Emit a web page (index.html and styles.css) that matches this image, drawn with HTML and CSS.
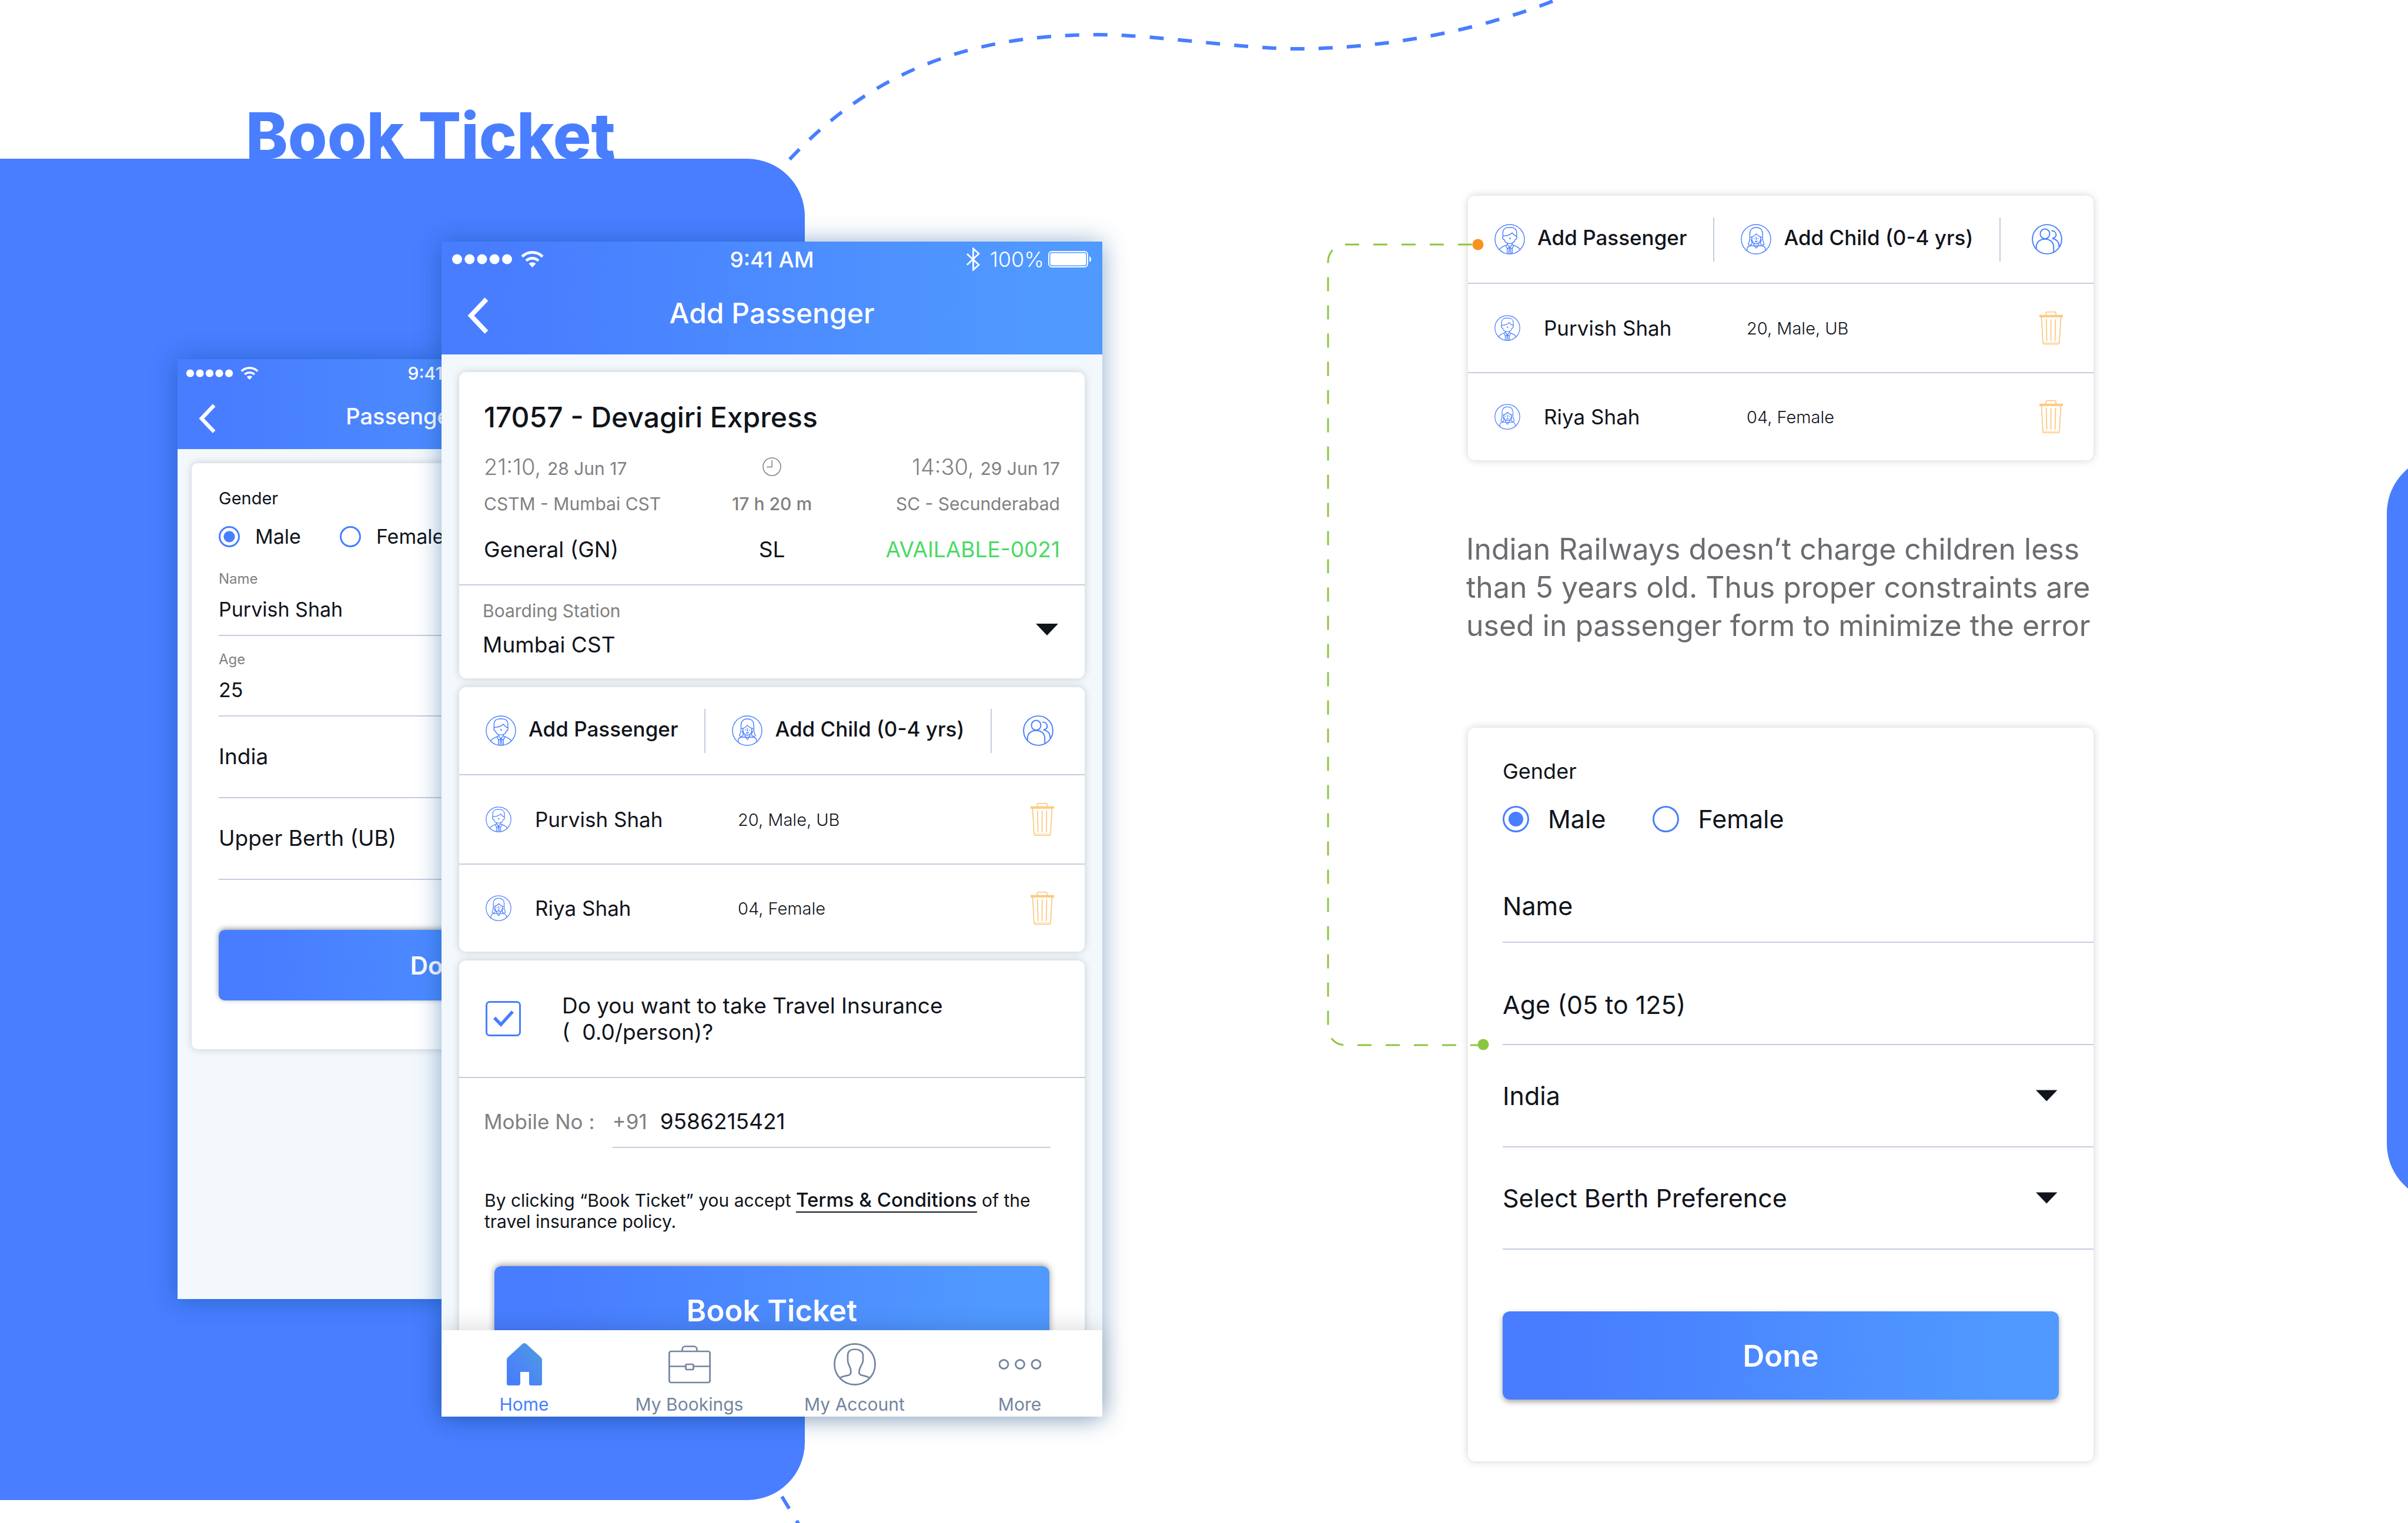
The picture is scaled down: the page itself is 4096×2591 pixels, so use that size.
FILE: index.html
```html
<!DOCTYPE html>
<html lang="en">
<head>
<meta charset="utf-8">
<title>Book Ticket</title>
<meta name="viewport" content="width=device-width, initial-scale=1">
<link rel="stylesheet" href="styles.css">
</head>
<body>
<svg class="sprite" aria-hidden="true">
  <defs>
    <linearGradient id="home-fill" x1="0" y1="1" x2="1" y2="0">
      <stop offset="0.1" stop-color="#487dff"/>
      <stop offset="0.9" stop-color="#4f98e2"/>
    </linearGradient>
    <symbol id="i-man" viewBox="0 0 74 74">
      <g fill="none" stroke="currentColor" stroke-width="2" stroke-linejoin="round" stroke-linecap="round">
        <circle cx="37" cy="37" r="35.6"/>
        <path d="M20.500 30V22C20.500 13 26 8.500 33 8.500H41C48 8.500 54 13 54 22V30"/>
        <path d="M23 29C29 29 37 27 43 21.500C45 24 47 27 51 29"/>
        <path d="M23 29C19 28 18 37 24 38C25 44 30 47.500 37 47.500S49 44 50 38C56 37 55 28 51 29"/>
        <path d="M37 33V36H39"/>
        <path d="M31.500 46V50L37 56L43 50V46"/>
        <path d="M31.500 50C24 53 16 55 12 62M43 50C50 53 58 55 62 62"/>
        <path d="M27.500 52L31.500 60L37 56L42.500 60L47 52"/>
        <path d="M31 60V71M43 60V71M36 59L35 72M38 59L40 72"/>
      </g>
    </symbol>
    <symbol id="i-girl" viewBox="0 0 74 74">
      <g fill="none" stroke="currentColor" stroke-width="2" stroke-linejoin="round" stroke-linecap="round">
        <circle cx="37" cy="37" r="35.6"/>
        <path d="M22 36V24C22 14 28 8.500 37.500 8.500S53 14 53 24V36"/>
        <path d="M24 32C31 31 34 28 37.500 24C41 28 45 31 51 32"/>
        <path d="M27 32V38C28 44 32 48 37.500 48S47 44 48 38V32"/>
        <path d="M22 36C22 42 18 46 18.500 50C22 52 27 51 27.500 46L25 38M53 36C53 42 57 46 56.500 50C53 52 48 51 47.500 46L50 38"/>
        <path d="M32.500 35V36M42.500 35V36M35 42C36 44 39 44 40 42ZM37.500 32V38"/>
        <path d="M31 48L33 53H42L44 48M34 54L37.500 58.500L41 54"/>
        <path d="M15 64C15 57 18 53 24 53H33M60 64C60 57 57 53 51 53H42"/>
      </g>
    </symbol>
    <symbol id="i-group" viewBox="0 0 74 74">
      <g fill="none" stroke="currentColor" stroke-width="2.800" stroke-linecap="round">
        <circle cx="37" cy="37" r="35.400"/>
        <ellipse cx="32" cy="24" rx="11.500" ry="11.800"/>
        <path d="M11 61V56C11 44 20 36.500 32 36.500S53 44 53 56V67"/>
        <path d="M48.500 16.500C55 17 59 21 59 26.500C59 31 55 34 49.500 35C59 37 66 43 66 54"/>
      </g>
    </symbol>
    <symbol id="i-trash" viewBox="0 0 54 76">
      <g fill="none" stroke="currentColor" stroke-width="2.200">
        <path d="M15 9V4C15 2 16 1 18 1H35C37 1 38 2 38 4V9"/>
        <path d="M1 9H53V12H1Z" fill="#ffdda9"/>
        <path d="M4.500 12L8 72C8 74 9 75 11 75H43C45 75 46 74 46 72L49.500 12"/>
        <path d="M8 71.500H46" stroke="#ffe3bb"/>
        <path d="M16 18L17 68M26.500 18V68M37 18L36 68"/>
      </g>
    </symbol>
    <symbol id="i-back" viewBox="0 0 36 62">
      <path d="M32.500 3L6 31L32.500 59" fill="none" stroke="currentColor" stroke-width="8"/>
    </symbol>
    <symbol id="i-signal" viewBox="0 0 102 18">
      <g fill="currentColor"><circle cx="8.500" cy="9" r="8.500"/><circle cx="29.800" cy="9" r="8.500"/><circle cx="51" cy="9" r="8.500"/><circle cx="72.200" cy="9" r="8.500"/><circle cx="93.500" cy="9" r="8.500"/></g>
    </symbol>
    <symbol id="i-wifi" viewBox="0 0 39 28">
      <path d="M2 9.500C12 0 27 0 37 9.500M9 16.500C15 11 24 11 30 16.500" fill="none" stroke="currentColor" stroke-width="4.600"/>
      <path d="M13.500 21.500C17 18.500 22 18.500 25.500 21.500L19.500 28Z" fill="currentColor"/>
    </symbol>
    <symbol id="i-caret" viewBox="0 0 38 20">
      <path d="M0 0H38L19 20Z" fill="currentColor"/>
    </symbol>
  </defs>
</svg>

<main class="board">
  <svg class="route" viewBox="0 0 4096 2591" aria-hidden="true">
    <path d="M2641 2C2520 50 2360 83 2207 83C2110 83 1965 59 1868 59C1640 59 1470 127 1326 290"/>
    <path d="M1330 2546L1364 2602"/>
  </svg>

  <section class="showcase">
    <h1 class="headline">Book Ticket</h1>
    <div class="phones">

      <article class="phone phone-back">
        <header class="phone-head">
          <div class="status">
            <div class="status-left">
              <svg class="signal"><use href="#i-signal"/></svg>
              <svg class="wifi"><use href="#i-wifi"/></svg>
            </div>
            <span class="clock-time">9:41 AM</span>
            <span></span>
          </div>
          <div class="navbar">
            <button class="icon-button back" type="button" aria-label="Back"><svg><use href="#i-back"/></svg></button>
            <h2 class="nav-title">Passenger Details</h2>
            <span></span>
          </div>
        </header>
        <div class="phone-body">
          <form class="card details-form compact">
            <fieldset class="gender">
              <legend>Gender</legend>
              <div class="choices">
                <label><input type="radio" name="gender-a" checked>Male</label>
                <label><input type="radio" name="gender-a">Female</label>
              </div>
            </fieldset>
            <div class="labelled">
              <label for="name-a">Name</label>
              <input id="name-a" type="text" value="Purvish Shah">
            </div>
            <div class="labelled">
              <label for="age-a">Age</label>
              <input id="age-a" type="text" value="25">
            </div>
            <div class="line-field">
              <select aria-label="Country"><option>India</option></select>
            </div>
            <div class="line-field">
              <select aria-label="Berth preference"><option>Upper Berth (UB)</option></select>
            </div>
            <button class="primary" type="button">Done</button>
          </form>
        </div>
      </article>

      <article class="phone phone-front">
        <header class="phone-head">
          <div class="status">
            <div class="status-left">
              <svg class="signal"><use href="#i-signal"/></svg>
              <svg class="wifi"><use href="#i-wifi"/></svg>
            </div>
            <span class="clock-time">9:41 AM</span>
            <div class="status-right">
              <svg class="bluetooth" viewBox="0 0 24 40"><path d="M2 11L22 29.500L12.500 38V2L22 10.500L2 29.500" fill="none" stroke="currentColor" stroke-width="2.800"/></svg>
              <span>100%</span>
              <svg class="battery" viewBox="0 0 74 28"><rect x="1" y="1" width="66" height="26" rx="5" fill="none" stroke="currentColor" stroke-width="2"/><rect x="3.500" y="3.500" width="61" height="21" rx="3" fill="currentColor"/><path d="M70 9C74 10 74 18 70 19Z" fill="currentColor"/></svg>
            </div>
          </div>
          <div class="navbar">
            <button class="icon-button back" type="button" aria-label="Back"><svg><use href="#i-back"/></svg></button>
            <h2 class="nav-title">Add Passenger</h2>
            <span></span>
          </div>
        </header>

        <div class="phone-body">
          <section class="card">
            <div class="trip">
              <h3>17057 - Devagiri Express</h3>
              <div class="trip-row trip-times">
                <p>21:10, <small>28 Jun 17</small></p>
                <svg viewBox="0 0 32 32" aria-hidden="true"><g fill="none" stroke="currentColor" stroke-width="1.500"><circle cx="16" cy="16" r="15"/><path d="M16 5V16.500H7"/></g></svg>
                <p>14:30, <small>29 Jun 17</small></p>
              </div>
              <div class="trip-row trip-stations">
                <p>CSTM - Mumbai CST</p>
                <p class="duration">17 h 20 m</p>
                <p>SC - Secunderabad</p>
              </div>
              <div class="trip-row trip-class">
                <p>General (GN)</p>
                <p>SL</p>
                <p class="available">AVAILABLE-0021</p>
              </div>
            </div>
            <div class="boarding">
              <label for="boarding">Boarding Station</label>
              <select id="boarding"><option>Mumbai CST</option></select>
              <svg class="caret"><use href="#i-caret"/></svg>
            </div>
          </section>

          <section class="card">
            <div class="toolbar">
              <button class="tool" type="button"><svg><use href="#i-man"/></svg><span>Add Passenger</span></button>
              <i class="rule"></i>
              <button class="tool" type="button"><svg><use href="#i-girl"/></svg><span>Add Child (0-4 yrs)</span></button>
              <i class="rule"></i>
              <button class="tool tool-last" type="button" aria-label="Saved passengers"><svg><use href="#i-group"/></svg></button>
            </div>
            <ul class="people">
              <li><svg class="face"><use href="#i-man"/></svg><span class="who">Purvish Shah</span><span class="facts">20, Male, UB</span><button class="icon-button trash" type="button" aria-label="Remove Purvish Shah"><svg><use href="#i-trash"/></svg></button></li>
              <li><svg class="face"><use href="#i-girl"/></svg><span class="who">Riya Shah</span><span class="facts">04, Female</span><button class="icon-button trash" type="button" aria-label="Remove Riya Shah"><svg><use href="#i-trash"/></svg></button></li>
            </ul>
          </section>

          <section class="card">
            <label class="insurance">
              <span class="tick">
                <input type="checkbox" checked>
                <svg viewBox="0 0 37 30"><path d="M3 13.500L14 25L34 3" fill="none" stroke="currentColor" stroke-width="5.500"/></svg>
              </span>
              <span>Do you want to take Travel Insurance<br>(&nbsp; 0.0/person)?</span>
            </label>
            <div class="mobile">
              <label for="mobile">Mobile No :</label>
              <div class="mobile-field"><span>+91</span><input id="mobile" type="tel" value="9586215421"></div>
            </div>
            <p class="terms">By clicking “Book Ticket” you accept <a href="#terms">Terms &amp; Conditions</a> of the travel insurance policy.</p>
            <button class="primary book" type="button">Book Ticket</button>
          </section>
        </div>

        <nav class="tabs" aria-label="Main">
          <a class="active" href="#home">
            <svg viewBox="0 0 72 72"><path d="M36 0C37.500 0 39 1 40 2L64 24C65.500 25.500 66 27 66 29V69C66 71 65 72 63 72H48C45 72 44 71 44 68V49H29V68C29 71 28 72 25 72H9C7 72 6 71 6 69V29C6 27 6.500 25.500 8 24L32 2C33 1 34.500 0 36 0Z" fill="url(#home-fill)"/></svg>
            <span>Home</span>
          </a>
          <a href="#bookings">
            <svg viewBox="0 0 72 72"><g fill="none" stroke="currentColor" stroke-width="2.700"><rect x="1.400" y="14" width="69.200" height="53" rx="3"/><path d="M23.500 14V11C23.500 7.500 26 5.500 29 5.500H43C46 5.500 48.500 7.500 48.500 11V14"/><path d="M1 39.500H29.500M42.500 39.500H71"/><rect x="29.500" y="36" width="13" height="9" rx="2"/></g></svg>
            <span>My Bookings</span>
          </a>
          <a href="#account">
            <svg viewBox="0 0 72 72"><g fill="none" stroke="currentColor" stroke-width="2.700"><circle cx="36" cy="36" r="34.600"/><path d="M11 59.500C14 56 22 56 27 54C30 52 29.500 49 29 45C28 40 24 35 24 29V21C24 14 29 10.500 36 10.500S50 14 50 21V29C50 35 45 40 44 45C43.500 49 42 52 46 54C51 56 58 56 61 59.500"/></g></svg>
            <span>My Account</span>
          </a>
          <a href="#more">
            <svg viewBox="0 0 72 72"><g fill="none" stroke="currentColor" stroke-width="2.800"><circle cx="8.500" cy="36" r="7.500"/><circle cx="36" cy="36" r="7.500"/><circle cx="63.500" cy="36" r="7.500"/></g></svg>
            <span>More</span>
          </a>
        </nav>
      </article>
    </div>
  </section>

  <section class="notes">
    <section class="card">
      <div class="toolbar">
        <button class="tool" type="button"><svg><use href="#i-man"/></svg><span>Add Passenger</span></button>
        <i class="rule"></i>
        <button class="tool" type="button"><svg><use href="#i-girl"/></svg><span>Add Child (0-4 yrs)</span></button>
        <i class="rule"></i>
        <button class="tool tool-last" type="button" aria-label="Saved passengers"><svg><use href="#i-group"/></svg></button>
      </div>
      <ul class="people">
        <li><svg class="face"><use href="#i-man"/></svg><span class="who">Purvish Shah</span><span class="facts">20, Male, UB</span><button class="icon-button trash" type="button" aria-label="Remove Purvish Shah"><svg><use href="#i-trash"/></svg></button></li>
        <li><svg class="face"><use href="#i-girl"/></svg><span class="who">Riya Shah</span><span class="facts">04, Female</span><button class="icon-button trash" type="button" aria-label="Remove Riya Shah"><svg><use href="#i-trash"/></svg></button></li>
      </ul>
    </section>

    <p class="explain">Indian Railways doesn’t charge children less than 5 years old. Thus proper constraints are used in passenger form to minimize the error</p>

    <form class="card details-form">
      <fieldset class="gender">
        <legend>Gender</legend>
        <div class="choices">
          <label><input type="radio" name="gender-b" checked>Male</label>
          <label><input type="radio" name="gender-b">Female</label>
        </div>
      </fieldset>
      <div class="line-field text-field first">
        <input type="text" placeholder="Name" aria-label="Name">
      </div>
      <div class="line-field text-field">
        <input type="text" placeholder="Age (05 to 125)" aria-label="Age (05 to 125)">
      </div>
      <div class="line-field">
        <select aria-label="Country"><option>India</option></select>
        <svg class="caret"><use href="#i-caret"/></svg>
      </div>
      <div class="line-field">
        <select aria-label="Berth preference"><option>Select Berth Preference</option></select>
        <svg class="caret"><use href="#i-caret"/></svg>
      </div>
      <button class="primary" type="button">Done</button>
    </form>

    <svg class="connector" viewBox="0 0 280 1390" aria-hidden="true">
      <path d="M250 14H34A29 29 0 0 0 5 43V1347A29 29 0 0 0 34 1376H262"/>
      <circle class="dot-start" cx="260" cy="14" r="9.500"/>
      <circle class="dot-end" cx="269" cy="1375" r="9.500"/>
    </svg>
  </section>
</main>
</body>
</html>
```

FILE: styles.css
```css
:root {
  --blue: #487eff;
  --ink: #10141b;
  --grey: #808080;
  --line: #c4cddf;
  --slate: #7385a0;
  --grad: linear-gradient(90deg, #487dff 10%, #5099ff 90%);
}

* { box-sizing: border-box; }

body {
  margin: 0;
  background: #fff;
  color: var(--ink);
  font-family: Inter, "Liberation Sans", sans-serif;
  font-size: 35px;
}

h1, h2, h3, p, ul, fieldset, legend { margin: 0; padding: 0; border: 0; }
ul { list-style: none; }
button, input, select { font: inherit; color: inherit; }
svg { display: block; }
.sprite { position: absolute; width: 0; height: 0; }

/* Board */
.board {
  position: relative;
  display: grid;
  grid-template-columns: minmax(0, 1875fr) minmax(0, 622fr) minmax(0, 1064fr) minmax(0, 535fr);
  min-height: 100vh;
  overflow: hidden;
}
.board::after {
  content: "";
  position: absolute;
  top: 775px;
  right: -160px;
  width: 196px;
  height: 1269px;
  border-radius: 98px;
  background: var(--blue);
}
.route {
  position: absolute;
  top: 0;
  left: 0;
  width: 100%;
  fill: none;
  stroke: var(--blue);
  stroke-width: 6px;
  stroke-dasharray: 24 24;
}

/* Showcase */
.showcase { position: relative; padding-top: 168px; }
.showcase::before {
  content: "";
  position: absolute;
  top: 270px;
  bottom: 39px;
  left: 0;
  width: 73%;
  border-radius: 0 98px 98px 0;
  background: var(--blue);
}
.headline {
  position: relative;
  padding-left: 418px;
  color: var(--blue);
  font-size: 108px;
  font-weight: 800;
  line-height: 126px;
}
.phones {
  position: relative;
  display: grid;
  grid-template-columns: minmax(0, 302fr) minmax(0, 449fr) minmax(0, 450fr) minmax(0, 674fr);
  align-items: start;
  padding-top: 117px;
}
.phone {
  grid-row: 1;
  display: flex;
  flex-direction: column;
  aspect-ratio: 375 / 667;
  min-height: 0;
  background: #f3f8fd;
  box-shadow: 0 2px 40px rgba(0, 72, 140, .45);
}
.phone-front { grid-column: 3 / 5; }
.phone-back { grid-column: 2 / 4; margin-top: 200px; }

.phone-head { background: var(--grad); color: #fff; }
.status, .navbar {
  display: grid;
  grid-template-columns: 1fr auto 1fr;
  align-items: center;
}
.status { height: 60px; padding: 0 18px; font-size: 36px; }
.status-left, .status-right { display: flex; align-items: center; }
.status-left { gap: 15px; }
.status-right { justify-content: flex-end; gap: 7px; font-weight: 300; }
.clock-time { font-size: 37px; font-weight: 500; }
.signal { width: 102px; height: 18px; }
.wifi { width: 39px; height: 28px; }
.bluetooth { width: 24px; height: 40px; margin-right: 10px; }
.battery { width: 74px; height: 28px; }
.navbar { height: 132px; padding: 0 44px; }
.nav-title { padding-bottom: 8px; font-size: 48px; font-weight: 500; line-height: 60px; }
.icon-button { padding: 0; border: 0; background: none; }
.back { justify-self: start; }
.back svg { width: 36px; height: 62px; }

.phone-body {
  flex: 1;
  display: flex;
  flex-direction: column;
  gap: 15px;
  min-height: 0;
  padding: 30px 30px 0;
  overflow: hidden;
}
.card {
  flex: none;
  border-radius: 12px;
  background: #fff;
  box-shadow: 0 0 14px rgba(0, 0, 0, .18);
}

/* Trip summary */
.trip { padding: 49px 42px 37px; border-bottom: 2px solid var(--line); }
.trip h3 { font-size: 48px; font-weight: 500; line-height: 56px; }
.trip-row {
  display: grid;
  grid-template-columns: 1fr auto 1fr;
  align-items: center;
}
.trip-row > :last-child { text-align: right; }
.trip-times { margin-top: 34px; color: var(--grey); font-size: 38px; line-height: 44px; font-weight: 300; }
.trip-times small { font-size: 30px; font-weight: 400; line-height: 30px; }
.trip-times svg { width: 32px; height: 32px; }
.trip-stations { margin-top: 23px; color: var(--grey); font-size: 30px; line-height: 36px; }
.duration { font-weight: 500; }
.trip-class { margin-top: 38px; font-size: 37px; line-height: 44px; }
.trip-class .available { color: #4cd964; }
.boarding {
  display: grid;
  grid-template-columns: 1fr auto;
  align-items: center;
  row-gap: 15px;
  padding: 25px 45px 34px 40px;
}
.boarding label { color: var(--grey); font-size: 30px; line-height: 36px; }
.boarding select { height: 48px; font-size: 37px; }
.boarding .caret { grid-area: 1 / 2 / 3 / 3; }
select {
  appearance: none;
  width: 100%;
  padding: 0;
  border: 0;
  background: none;
}
.caret { width: 38px; height: 20px; }

/* Passengers */
.toolbar {
  display: flex;
  align-items: center;
  height: 150px;
  border-bottom: 2px solid var(--line);
}
.tool {
  display: flex;
  align-items: center;
  gap: 21px;
  padding: 0 45px;
  border: 0;
  background: none;
  font-weight: 500;
  white-space: nowrap;
}
.tool svg { width: 52px; height: 52px; color: var(--blue); }
.tool span { padding-bottom: 6px; line-height: 44px; }
.tool-last { margin-left: auto; padding: 0 53px 0 0; }
.rule { width: 2px; height: 75px; background: var(--line); }
.people li {
  display: grid;
  grid-template-columns: 44px 305px 1fr 40px;
  column-gap: 40px;
  align-items: center;
  height: 152px;
  padding: 0 52px 0 45px;
  border-bottom: 2px solid var(--line);
}
.people li:last-child { height: 148px; border-bottom: 0; }
.face { width: 44px; height: 44px; color: var(--blue); }
.facts { font-size: 29px; font-weight: 300; }
.trash { color: #fdc576; }
.trash svg { width: 40px; height: 56px; }

/* Insurance */
.insurance {
  display: flex;
  align-items: center;
  gap: 70px;
  height: 200px;
  padding: 0 45px;
  border-bottom: 2px solid var(--line);
  font-size: 37px;
  line-height: 45px;
}
.tick { display: grid; place-items: center; color: var(--blue); }
.tick input {
  appearance: none;
  grid-area: 1 / 1;
  width: 60px;
  height: 60px;
  margin: 0;
  border: 3px solid var(--blue);
  border-radius: 7px;
}
.tick svg { grid-area: 1 / 1; width: 37px; height: 30px; }
.mobile { display: flex; gap: 30px; padding: 50px 58px 0 42px; line-height: 48px; }
.mobile label, .mobile span { color: var(--grey); }
.mobile-field {
  flex: 1;
  display: flex;
  gap: 22px;
  padding-bottom: 19px;
  border-bottom: 2px solid var(--line);
}
.mobile-field input { flex: 1; min-width: 0; height: 48px; padding: 0; border: 0; background: none; font-size: 37px; }
.terms { padding: 71px 43px 0; font-size: 30px; line-height: 36px; }
.terms a {
  border-bottom: 2px solid var(--ink);
  color: inherit;
  font-size: 33px;
  font-weight: 500;
  line-height: 33px;
  text-decoration: none;
}
.primary {
  display: block;
  height: 150px;
  border: 0;
  border-radius: 12px;
  background: var(--grad);
  box-shadow: 0 4px 10px rgba(0, 0, 0, .35);
  color: #fff;
  font-size: 51px;
  font-weight: 600;
}
.book { width: calc(100% - 120px); margin: 58px 60px 0; box-shadow: 0 -2px 12px rgba(0, 0, 0, .4); }

/* Tab bar */
.tabs {
  position: relative;
  display: flex;
  height: 147px;
  background: #fff;
  box-shadow: 0 -4px 36px rgba(0, 0, 0, .14);
}
.tabs a {
  flex: 1;
  display: flex;
  flex-direction: column;
  align-items: center;
  gap: 14px;
  padding-top: 22px;
  color: var(--slate);
  font-size: 30px;
  line-height: 36px;
  text-decoration: none;
}
.tabs .active { color: var(--blue); }
.tabs svg { width: 72px; height: 72px; }

/* Details form */
.details-form { padding: 52px 0 105px 59px; font-size: 43px; }
.gender legend { font-size: 36px; line-height: 44px; }
.choices { display: flex; gap: 80px; padding-top: 35px; line-height: 48px; }
.choices label { display: flex; align-items: center; gap: 32px; }
.choices input {
  appearance: none;
  width: 45px;
  height: 45px;
  margin: 0;
  border: 3px solid var(--blue);
  border-radius: 50%;
}
.choices input:checked { background: radial-gradient(circle, var(--blue) 12px, transparent 13px); }
.line-field {
  display: flex;
  align-items: center;
  height: 174px;
  padding-right: 61px;
  border-bottom: 2px solid var(--line);
}
.text-field { padding-top: 38px; }
.first { height: 162px; margin-top: 25px; }
.line-field input { width: 100%; padding: 0; border: 0; background: none; }
.line-field input::placeholder { color: var(--ink); opacity: 1; }
.details-form .primary { width: calc(100% - 59px); margin-top: 105px; }

/* Back phone */
.phone-back .status { height: 48px; padding: 0 14px; }
.phone-back .clock-time { font-size: 30px; }
.phone-back .status-left { gap: 12px; }
.phone-back .signal { width: 81px; height: 14px; }
.phone-back .wifi { width: 31px; height: 22px; }
.phone-back .navbar { height: 105px; padding: 0 36px; }
.phone-back .nav-title { font-size: 38px; line-height: 48px; }
.phone-back .back svg { width: 29px; height: 50px; }
.phone-back .phone-body { padding: 24px 24px 0; }
.phone-back .card { border-radius: 10px; }
.compact { padding: 42px 0 83px 46px; font-size: 34px; }
.compact .gender legend { font-size: 29px; line-height: 36px; }
.compact .choices { gap: 66px; padding-top: 25px; line-height: 44px; }
.compact .choices label { gap: 26px; }
.compact .choices input { width: 36px; height: 36px; }
.compact .choices input:checked { background: radial-gradient(circle, var(--blue) 9px, transparent 10px); }
.labelled {
  display: grid;
  gap: 15px;
  margin-top: 26px;
  padding-bottom: 22px;
  border-bottom: 2px solid var(--line);
}
.gender + .labelled { margin-top: 36px; }
.labelled label { color: var(--grey); font-size: 24px; line-height: 28px; }
.labelled input { height: 44px; padding: 0; border: 0; background: none; }
.compact .line-field { height: 139px; padding-bottom: 2px; font-size: 37px; }
.compact .primary {
  width: calc(100% - 47px);
  height: 120px;
  margin-top: 85px;
  border-radius: 10px;
  box-shadow: 0 -2px 10px rgba(0, 0, 0, .4);
  font-size: 42px;
}

/* Notes */
.notes { position: relative; grid-column: 3; padding-top: 333px; }
.explain {
  margin: 119px -3px 141px;
  color: #6a6c70;
  font-size: 50px;
  line-height: 65px;
}
.connector {
  position: absolute;
  top: 402px;
  left: -243px;
  width: 280px;
  height: 1390px;
}
.connector path {
  fill: none;
  stroke: #8cc63f;
  stroke-width: 3px;
  stroke-dasharray: 24 24;
}
.dot-start { fill: #f7931e; }
.dot-end { fill: #8cc63f; }
```
